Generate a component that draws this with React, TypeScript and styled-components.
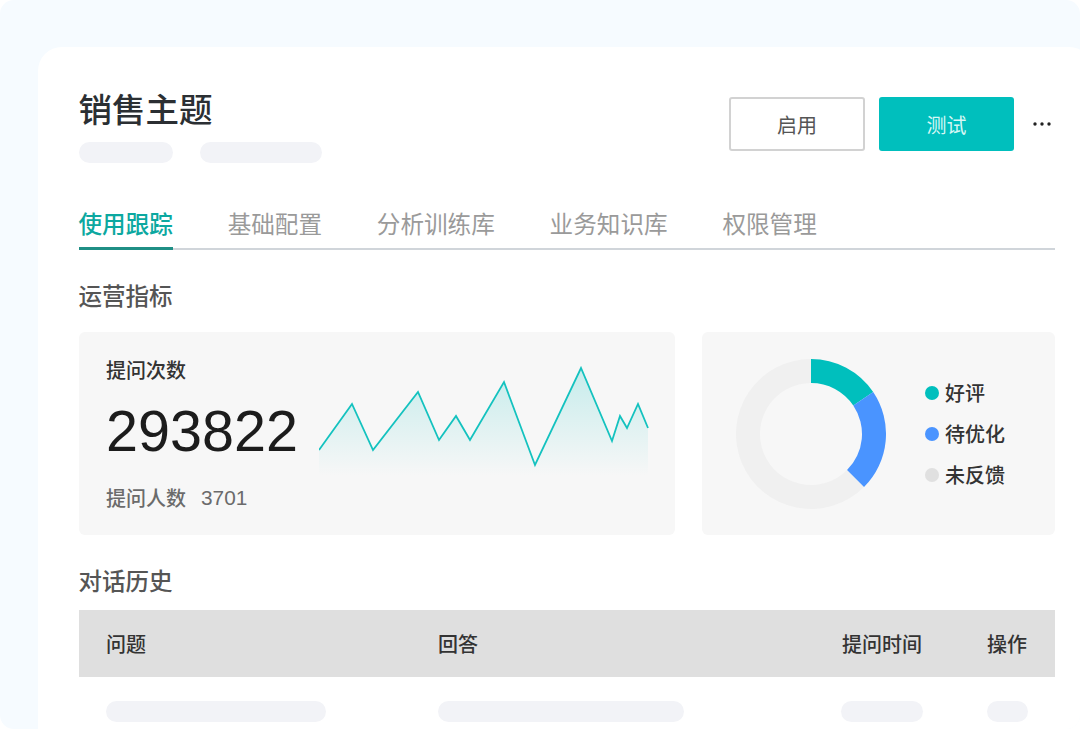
import React from 'react'
import styled, { createGlobalStyle } from 'styled-components'

const GlobalStyle = createGlobalStyle`
  html, body {
    margin: 0;
    padding: 0;
    background: #fff;
  }
  * {
    box-sizing: border-box;
  }
`
const Frame = styled.div`
  width: 1080px;
  height: 729px;
  overflow: hidden;
  padding: 47px 0 0 37.5px;
  background: #f6fbff;
  border-radius: 14px;
  font-family: 'Noto Sans CJK SC', 'Noto Sans', sans-serif;
`
const Card = styled.div`
  width: 1055px;
  height: 700px;
  padding: 36px 37.5px 0 41px;
  background: #fff;
  border-radius: 24px 24px 0 0;
`
const Header = styled.div`
  display: flex;
  justify-content: space-between;
  align-items: flex-start;
`
const Title = styled.h1`
  margin: 0;
  font-size: 33.5px;
  line-height: 50px;
  font-weight: 500;
  color: #2b2f33;
`
const PlaceholderRow = styled.div`
  display: flex;
  gap: 27px;
  margin-top: 9px;
`
const Placeholder = styled.div<{ $width: number }>`
  width: ${(props) => props.$width}px;
  height: 21px;
  border-radius: 10.5px;
  background: #f2f3f7;
`
const Actions = styled.div`
  display: flex;
  align-items: center;
  margin: 14px 4px 0 0;
`
const Button = styled.button<{ $primary?: boolean }>`
  width: ${(props) => (props.$primary ? 135 : 136)}px;
  height: 54px;
  margin-right: ${(props) => (props.$primary ? 15 : 14)}px;
  padding: 0;
  border: ${(props) => (props.$primary ? '0' : '2px solid #d2d2d2')};
  border-radius: 3px;
  background: ${(props) => (props.$primary ? '#00bfbd' : '#fff')};
  color: ${(props) => (props.$primary ? '#d6f7f5' : '#555')};
  font-family: inherit;
  font-size: 20px;
`
const MoreDots = styled.svg`
  width: 18px;
  height: 4px;
  margin-left: 4px;
`
const Tabs = styled.div`
  display: flex;
  gap: 54.8px;
  margin-top: 42px;
  border-bottom: 2px solid #d0d5da;
`
const Tab = styled.div<{ $active?: boolean }>`
  height: 45px;
  margin-bottom: -2px;
  font-size: 23.6px;
  line-height: 36px;
  font-weight: ${(props) => (props.$active ? 500 : 400)};
  color: ${(props) => (props.$active ? '#0ca8a0' : '#9a9a9a')};
  border-bottom: ${(props) => (props.$active ? '3px solid #1f8f85' : '0')};
`
const SectionTitle = styled.h2<{ $top: number }>`
  margin: ${(props) => props.$top}px 0 0;
  font-size: 23.5px;
  line-height: 36px;
  font-weight: 500;
  color: #555;
`
const Panels = styled.div`
  display: flex;
  gap: 27px;
  margin-top: 19px;
`
const Panel = styled.div`
  height: 203px;
  border-radius: 6px;
  background: #f7f7f7;
`
const StatPanel = styled(Panel)`
  position: relative;
  width: 596.5px;
  padding: 22px 27.5px;
`
const StatLabel = styled.div`
  font-size: 20px;
  line-height: 32px;
  font-weight: 500;
  color: #333;
`
const StatValue = styled.div`
  margin-top: 12px;
  font-family: 'Liberation Sans', sans-serif;
  font-size: 57.5px;
  line-height: 66px;
  color: #1c1c1c;
`
const StatFooter = styled.div`
  display: flex;
  gap: 15px;
  margin-top: 18px;
  font-size: 20px;
  line-height: 32px;
  font-weight: 500;
  color: #6b6b6b;
`
const FooterNumber = styled.span`
  font-family: 'Liberation Sans', sans-serif;
  font-size: 20.8px;
  font-weight: 400;
`
const Sparkline = styled.svg`
  position: absolute;
  left: 240.5px;
  top: 34px;
  width: 330px;
  height: 110px;
`
const DonutPanel = styled(Panel)`
  display: flex;
  align-items: center;
  width: 353px;
  padding: 0 0 0 34px;
`
const Donut = styled.svg`
  width: 150px;
  height: 150px;
`
const Legend = styled.div`
  display: flex;
  flex-direction: column;
  gap: 9px;
  margin-left: 38.5px;
`
const LegendItem = styled.div`
  display: flex;
  align-items: center;
  gap: 6.5px;
  font-size: 20px;
  line-height: 32px;
  font-weight: 500;
  color: #333;
`
const Dot = styled.span<{ $color: string }>`
  width: 14px;
  height: 14px;
  border-radius: 50%;
  background: ${(props) => props.$color};
`
const TableHead = styled.div`
  display: grid;
  grid-template-columns: 332px 404px 145px 1fr;
  align-items: center;
  height: 67px;
  margin-top: 12px;
  padding-left: 27.5px;
  background: #dfdfdf;
  font-size: 20px;
  font-weight: 500;
  color: #333;
`
const TableBody = styled.div`
  display: grid;
  grid-template-columns: 332px 403px 146px 1fr;
  margin-top: 24px;
  padding-left: 27.5px;
`

const line = '319,450 352,404 373,450 418,392 439,440 456,416 470,440 504,382 535,465 581,368 612,441 620,416 627,428 638,404 648,428'

const toSparkPoints = (points: string) =>
  points
    .split(' ')
    .map((p) => {
      const [x, y] = p.split(',').map(Number)
      return `${x - 319},${y - 368 + 2}`
    })
    .join(' ')

const polar = (r: number, deg: number) => {
  const a = (deg * Math.PI) / 180
  return `${(75 + r * Math.sin(a)).toFixed(2)} ${(75 - r * Math.cos(a)).toFixed(2)}`
}

const arc = (from: number, to: number) => {
  const large = to - from > 180 ? 1 : 0
  return `M${polar(75, from)} A75 75 0 ${large} 1 ${polar(75, to)} L${polar(51, to)} A51 51 0 ${large} 0 ${polar(51, from)} Z`
}

const App = () => {
  const sparkPoints = toSparkPoints(line)
  return (
    <Frame>
      <GlobalStyle />
      <Card>
        <Header>
          <div>
            <Title>销售主题</Title>
            <PlaceholderRow>
              <Placeholder $width={94} />
              <Placeholder $width={122} />
            </PlaceholderRow>
          </div>
          <Actions>
            <Button>启用</Button>
            <Button $primary>测试</Button>
            <MoreDots viewBox="0 0 18 4">
              <circle cx="2" cy="2" r="1.7" fill="#222" />
              <circle cx="9" cy="2" r="1.7" fill="#222" />
              <circle cx="16" cy="2" r="1.7" fill="#222" />
            </MoreDots>
          </Actions>
        </Header>
        <Tabs>
          <Tab $active>使用跟踪</Tab>
          <Tab>基础配置</Tab>
          <Tab>分析训练库</Tab>
          <Tab>业务知识库</Tab>
          <Tab>权限管理</Tab>
        </Tabs>
        <SectionTitle $top={27}>运营指标</SectionTitle>
        <Panels>
          <StatPanel>
            <StatLabel>提问次数</StatLabel>
            <StatValue>293822</StatValue>
            <StatFooter>
              提问人数
              <FooterNumber>3701</FooterNumber>
            </StatFooter>
            <Sparkline viewBox="0 0 330 110">
              <defs>
                <linearGradient id="spark" x1="0" y1="0" x2="0" y2="1">
                  <stop offset="0" stopColor="#00bfbd" stopOpacity="0.2" />
                  <stop offset="1" stopColor="#00bfbd" stopOpacity="0" />
                </linearGradient>
              </defs>
              <polygon points={`${sparkPoints} 329,110 0,110`} fill="url(#spark)" />
              <polyline points={sparkPoints} fill="none" stroke="#14c2bf" strokeWidth="1.8" />
            </Sparkline>
          </StatPanel>
          <DonutPanel>
            <Donut viewBox="0 0 150 150">
              <path d={arc(135, 359.99)} fill="#f0f0f0" />
              <path d={arc(0, 56)} fill="#00bfbd" />
              <path d={arc(56, 135)} fill="#4a94ff" />
            </Donut>
            <Legend>
              <LegendItem>
                <Dot $color="#00bfbd" />
                好评
              </LegendItem>
              <LegendItem>
                <Dot $color="#4a94ff" />
                待优化
              </LegendItem>
              <LegendItem>
                <Dot $color="#e0e0e0" />
                未反馈
              </LegendItem>
            </Legend>
          </DonutPanel>
        </Panels>
        <SectionTitle $top={27}>对话历史</SectionTitle>
        <TableHead>
          <span>问题</span>
          <span>回答</span>
          <span>提问时间</span>
          <span>操作</span>
        </TableHead>
        <TableBody>
          <Placeholder $width={220} />
          <Placeholder $width={246} />
          <Placeholder $width={82} />
          <Placeholder $width={41} />
        </TableBody>
      </Card>
    </Frame>
  )
}

export default App
